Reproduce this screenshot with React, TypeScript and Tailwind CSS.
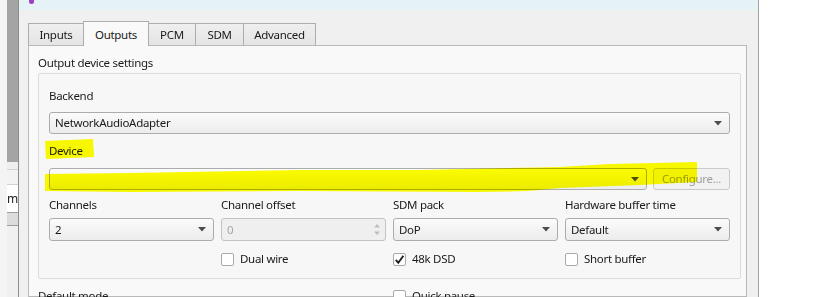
import React from "react";

const font = "font-['Noto_Sans','Open_Sans',sans-serif]";
const txt = "text-[11.5px] tracking-[-0.3px]";

function Arrow() {
  return (
    <svg width="8" height="5" viewBox="0 0 8 5" className="shrink-0">
      <polygon points="0,0 8,0 4,4.5" fill="#4d4d4d" />
    </svg>
  );
}

function Combo({ value, h = "h-[22px]" }: { value: string; h?: string }) {
  return (
    <div
      className={`flex items-center ${h} rounded-[3px] border border-[#acacac] bg-linear-to-b from-[#fbfbfb] to-[#ececec] pl-[5px] pr-[7px] ${txt} text-[#1a1a1a]`}
    >
      <span className="flex-1 truncate">{value}</span>
      <Arrow />
    </div>
  );
}

function Check({ checked, label }: { checked?: boolean; label: string }) {
  return (
    <div className={`flex h-4 items-center gap-[6px] ${txt} text-[#1a1a1a]`}>
      <div className="flex h-[13px] w-[13px] shrink-0 items-center justify-center rounded-[2px] border border-[#a9a9a9] bg-white">
        {checked && (
          <svg width="11" height="11" viewBox="0 0 11 11">
            <path d="M1.8 5.8 L4.3 8.8 L9.4 1.8" fill="none" stroke="#1c1c1c" strokeWidth="1.9" />
          </svg>
        )}
      </div>
      <span>{label}</span>
    </div>
  );
}

const tabs = [
  { name: "Inputs", w: "w-[56px]" },
  { name: "Outputs", w: "w-[66px]", active: true },
  { name: "PCM", w: "w-[48px]" },
  { name: "SDM", w: "w-[49px]" },
  { name: "Advanced", w: "w-[73px]" },
];

export default function App() {
  return (
    <div className={`relative flex h-[297px] w-[838px] overflow-hidden bg-white ${font}`}>
      {/* window behind */}
      <div className="flex w-[18px] shrink-0">
        <div className="w-[7px] bg-[#f4f4f4]" />
        <div className="flex w-[11px] flex-col">
          <div className="h-[162px] shrink-0 bg-[#a4a4a4]" />
          <div className="h-[7px] shrink-0 bg-[#efefef]" />
          <div className="h-[16px] shrink-0 border-y border-[#d2d2d2] bg-[#f3f3f3]" />
          <div className="flex h-[27px] shrink-0 items-center text-[12px] leading-none text-[#222]">m</div>
          <div className="h-[14px] shrink-0 border-y border-[#9e9e9e] bg-[#dcdcdc]" />
          <div className="flex-1 bg-[#f0f0f0]" />
        </div>
      </div>

      {/* settings window */}
      <div className="flex w-[741px] shrink-0 flex-col border-x border-l-[#8c8c8c] border-r-[#a3a3a3] bg-[#f0f0f0]">
        <div className="flex h-[10px] shrink-0 items-end overflow-hidden bg-[#e5f3f7] pl-[10px]">
          <div className="mb-[6px] h-[6px] w-[5px] rounded-sm bg-[#9b3fc4]" />
        </div>

        <div className="flex h-[35px] shrink-0 items-end pl-[9px]">
          {tabs.map((t) =>
            t.active ? (
              <div
                key={t.name}
                className={`relative z-10 -mb-px -ml-px flex h-[25px] ${t.w} justify-center border border-b-0 border-[#adadad] bg-[#f9f9f9] pt-[4px] ${txt} text-[#1a1a1a]`}
              >
                {t.name}
              </div>
            ) : (
              <div
                key={t.name}
                className={`-ml-px flex h-[22px] ${t.w} justify-center border border-b-0 border-[#adadad] bg-linear-to-b from-[#efefef] to-[#e4e4e4] pt-[2px] ${txt} text-[#1a1a1a] first:ml-0`}
              >
                {t.name}
              </div>
            )
          )}
        </div>

        <div className="ml-[9px] mr-[11px] min-h-0 flex-1 shrink-0 border border-[#b9b9b9] bg-[#f9f9f9] pl-[9px] pr-[5px] pt-[9px]">
          <div className={`${txt} leading-4 text-[#1a1a1a]`}>Output device settings</div>

          <div className="mt-[2px] rounded-[2px] border border-[#dcdcdc] bg-[#f7f7f7] px-[10px] pb-[11px] pt-[14px]">
            <div className={`${txt} leading-4 text-[#1a1a1a]`}>Backend</div>
            <div className="mt-[8px]">
              <Combo value="NetworkAudioAdapter" />
            </div>

            <div className={`mt-[9px] ${txt} leading-4 text-[#1a1a1a]`}>Device</div>
            <div className="mt-[9px] flex gap-[6px]">
              <div className="flex-1">
                <Combo value="" />
              </div>
              <div className={`flex h-[22px] w-[77px] items-center justify-center rounded-[3px] border border-[#cacaca] bg-[#f2f2f2] ${txt} text-[#9d9d9d]`}>
                Configure...
              </div>
            </div>

            <div className={`mt-[7px] grid grid-cols-4 gap-x-[7px] ${txt} leading-4 text-[#1a1a1a]`}>
              <div>Channels</div>
              <div>Channel offset</div>
              <div>SDM pack</div>
              <div>Hardware buffer time</div>

              <div className="mt-[5px]">
                <Combo value="2" h="h-[23px]" />
              </div>
              <div className="mt-[5px]">
                <div className="flex h-[23px] items-center rounded-[3px] border border-[#c3c3c3] bg-[#efefef] pl-[5px] pr-[4px] text-[#a6a6a6]">
                  <span className="flex-1">0</span>
                  <svg width="8" height="15" viewBox="0 0 8 15">
                    <polygon points="1,5.5 7,5.5 4,2" fill="#bdbdbd" />
                    <polygon points="1,9.5 7,9.5 4,13" fill="#bdbdbd" />
                  </svg>
                </div>
              </div>
              <div className="mt-[5px]">
                <Combo value="DoP" h="h-[23px]" />
              </div>
              <div className="mt-[5px]">
                <Combo value="Default" h="h-[23px]" />
              </div>

              <div className="mt-[10px]" />
              <div className="mt-[10px]">
                <Check label="Dual wire" />
              </div>
              <div className="mt-[10px]">
                <Check checked label="48k DSD" />
              </div>
              <div className="mt-[10px]">
                <Check label="Short buffer" />
              </div>
            </div>
          </div>

          <div className={`mt-[9px] flex ${txt} leading-4 text-[#1a1a1a]`}>
            <div className="w-[355px]">Default mode</div>
            <Check label="Quick pause" />
          </div>
        </div>
      </div>

      <div className="flex-1 bg-white" />

      {/* highlighter marks over the screenshot */}
      <svg
        className="pointer-events-none absolute left-0 top-0 mix-blend-multiply"
        width="838"
        height="297"
        viewBox="0 0 838 297"
      >
        <polygon points="45,141 93,139 94,157 46,159" fill="#ffff00" />
        <polygon
          points="45,174 130,173 300,170 420,170 560,167 610,164 697,162 697,182 640,185 560,188 528,191 480,192 300,191 130,192 45,191"
          fill="#ffff00"
        />
      </svg>
    </div>
  );
}
